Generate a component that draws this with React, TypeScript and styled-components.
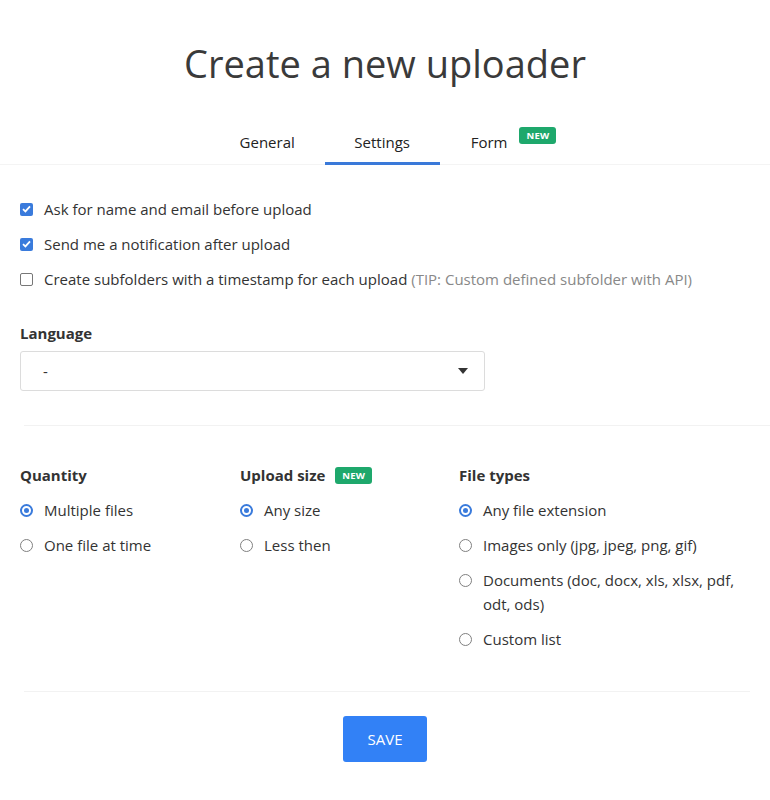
import React, { useState } from 'react'
import styled, { createGlobalStyle } from 'styled-components'

const GlobalStyle = createGlobalStyle`
  body {
    margin: 0;
    background: #fff;
    font-family: "Open Sans", "Noto Sans", sans-serif;
    color: #333;
  }
`

const Page = styled.div`
  width: 770px;
  padding-top: 40px;
`

const Title = styled.h1`
  margin: 0;
  text-align: center;
  font-size: 38px;
  line-height: 46px;
  font-weight: 400;
  color: #3a3a3a;
`

const TabBar = styled.div`
  margin-top: 46px;
  display: flex;
  justify-content: center;
  padding-right: 4px;
  border-bottom: 1px solid #f4f4f4;
`

const Tab = styled.div<{ $active?: boolean; $last?: boolean }>`
  display: flex;
  align-items: flex-start;
  gap: 12px;
  width: ${p => (p.$last ? 'auto' : '115px')};
  padding: ${p => (p.$last ? '0 0 10px 31px' : '0 0 10px')};
  justify-content: ${p => (p.$last ? 'flex-start' : 'center')};
  font-size: 15px;
  line-height: 20px;
  color: #222;
  border-bottom: 3px solid ${p => (p.$active ? '#3a79d9' : 'transparent')};
  margin-bottom: -1px;
  cursor: pointer;
`

const Badge = styled.span<{ $raised?: boolean }>`
  display: inline-block;
  background: #1ea86c;
  color: #fff;
  font-size: 9.5px;
  font-weight: 700;
  line-height: 17px;
  padding: 0 7px;
  border-radius: 3px;
  letter-spacing: 0.2px;
  margin-top: ${p => (p.$raised ? '-5px' : '0')};
`

const Body = styled.div`
  padding: 32px 20px 0;
`

const Option = styled.label`
  display: flex;
  align-items: flex-start;
  gap: 11px;
  font-size: 15px;
  line-height: 24px;
  color: #333;
  margin-bottom: 11px;
  cursor: pointer;
`

const Tip = styled.span`
  color: #888;
`

const Box = styled.span<{ $checked?: boolean }>`
  flex: none;
  width: 13px;
  height: 13px;
  margin-top: 5.5px;
  box-sizing: border-box;
  border-radius: 2px;
  background: ${p => (p.$checked ? '#3a7bdc' : '#fff')};
  border: ${p => (p.$checked ? 'none' : '1.5px solid #777')};
  display: flex;
  align-items: center;
  justify-content: center;
`

const Radio = styled.span<{ $checked?: boolean }>`
  flex: none;
  width: 13px;
  height: 13px;
  margin-top: 5.5px;
  box-sizing: border-box;
  border-radius: 50%;
  border: ${p => (p.$checked ? '2px solid #3a7bdc' : '1.5px solid #808080')};
  display: flex;
  align-items: center;
  justify-content: center;
  &::after {
    content: '';
    display: ${p => (p.$checked ? 'block' : 'none')};
    width: 5px;
    height: 5px;
    border-radius: 50%;
    background: #3a7bdc;
  }
`

const Label = styled.div`
  margin-top: 31px;
  font-size: 15px;
  line-height: 22px;
  font-weight: 700;
  color: #333;
  display: flex;
  align-items: center;
  gap: 10px;
`

const Select = styled.div`
  margin-top: 7px;
  width: 465px;
  height: 40px;
  box-sizing: border-box;
  border: 1px solid #dcdcdc;
  border-radius: 3px;
  display: flex;
  align-items: center;
  justify-content: space-between;
  padding: 0 16px 0 22px;
  font-size: 15px;
  color: #333;
  margin-bottom: 34px;
`

const Divider = styled.hr<{ $wide?: boolean }>`
  border: none;
  border-top: 1px solid #f2f2f2;
  margin: 0 ${p => (p.$wide ? '-20px' : '0')} 0 4px;
`

const Columns = styled.div`
  display: grid;
  grid-template-columns: 220px 219px 292px;
  margin-top: 38px;
  margin-bottom: 29px;
`

const Column = styled.div`
  display: flex;
  flex-direction: column;
`

const ColHead = styled(Label)`
  margin: 0 0 12px;
`

const Footer = styled.div`
  display: flex;
  justify-content: center;
  padding: 24px 0 38px;
`

const SaveButton = styled.button`
  width: 84px;
  height: 46px;
  border: none;
  border-radius: 3px;
  background: #3281f6;
  color: #fff;
  font-family: inherit;
  font-size: 15px;
  cursor: pointer;
`

const Check = () => (
  <svg width="9" height="8" viewBox="0 0 9 8">
    <path d="M1 4.2 L3.4 6.4 L8 1.4" fill="none" stroke="#fff" strokeWidth="1.8" />
  </svg>
)

const Caret = () => (
  <svg width="10" height="6" viewBox="0 0 10 6">
    <path d="M0 0 H10 L5 6 Z" fill="#333" />
  </svg>
)

const App = () => {
  const [checks, setChecks] = useState([true, true, false])
  const [quantity, setQuantity] = useState(0)
  const [size, setSize] = useState(0)
  const [types, setTypes] = useState(0)

  const toggle = (i: number) => setChecks(checks.map((c, j) => (j === i ? !c : c)))

  const checkRows = [
    <>Ask for name and email before upload</>,
    <>Send me a notification after upload</>,
    <>Create subfolders with a timestamp for each upload <Tip>(TIP: Custom defined subfolder with API)</Tip></>
  ]

  const radioGroup = (items: string[], value: number, set: (n: number) => void) =>
    items.map((item, i) => (
      <Option key={item} onClick={() => set(i)}>
        <Radio $checked={value === i} />
        <span>{item}</span>
      </Option>
    ))

  return (
    <Page>
      <GlobalStyle />
      <Title>Create a new uploader</Title>
      <TabBar>
        <Tab>General</Tab>
        <Tab $active>Settings</Tab>
        <Tab $last>
          Form <Badge $raised>NEW</Badge>
        </Tab>
      </TabBar>
      <Body>
        {checkRows.map((row, i) => (
          <Option key={i} onClick={() => toggle(i)}>
            <Box $checked={checks[i]}>{checks[i] && <Check />}</Box>
            <span>{row}</span>
          </Option>
        ))}
        <Label>Language</Label>
        <Select>
          <span>-</span>
          <Caret />
        </Select>
        <Divider $wide />
        <Columns>
          <Column>
            <ColHead>Quantity</ColHead>
            {radioGroup(['Multiple files', 'One file at time'], quantity, setQuantity)}
          </Column>
          <Column>
            <ColHead>
              Upload size <Badge>NEW</Badge>
            </ColHead>
            {radioGroup(['Any size', 'Less then'], size, setSize)}
          </Column>
          <Column>
            <ColHead>File types</ColHead>
            {radioGroup(
              [
                'Any file extension',
                'Images only (jpg, jpeg, png, gif)',
                'Documents (doc, docx, xls, xlsx, pdf, odt, ods)',
                'Custom list'
              ],
              types,
              setTypes
            )}
          </Column>
        </Columns>
        <Divider />
        <Footer>
          <SaveButton>SAVE</SaveButton>
        </Footer>
      </Body>
    </Page>
  )
}

export default App
